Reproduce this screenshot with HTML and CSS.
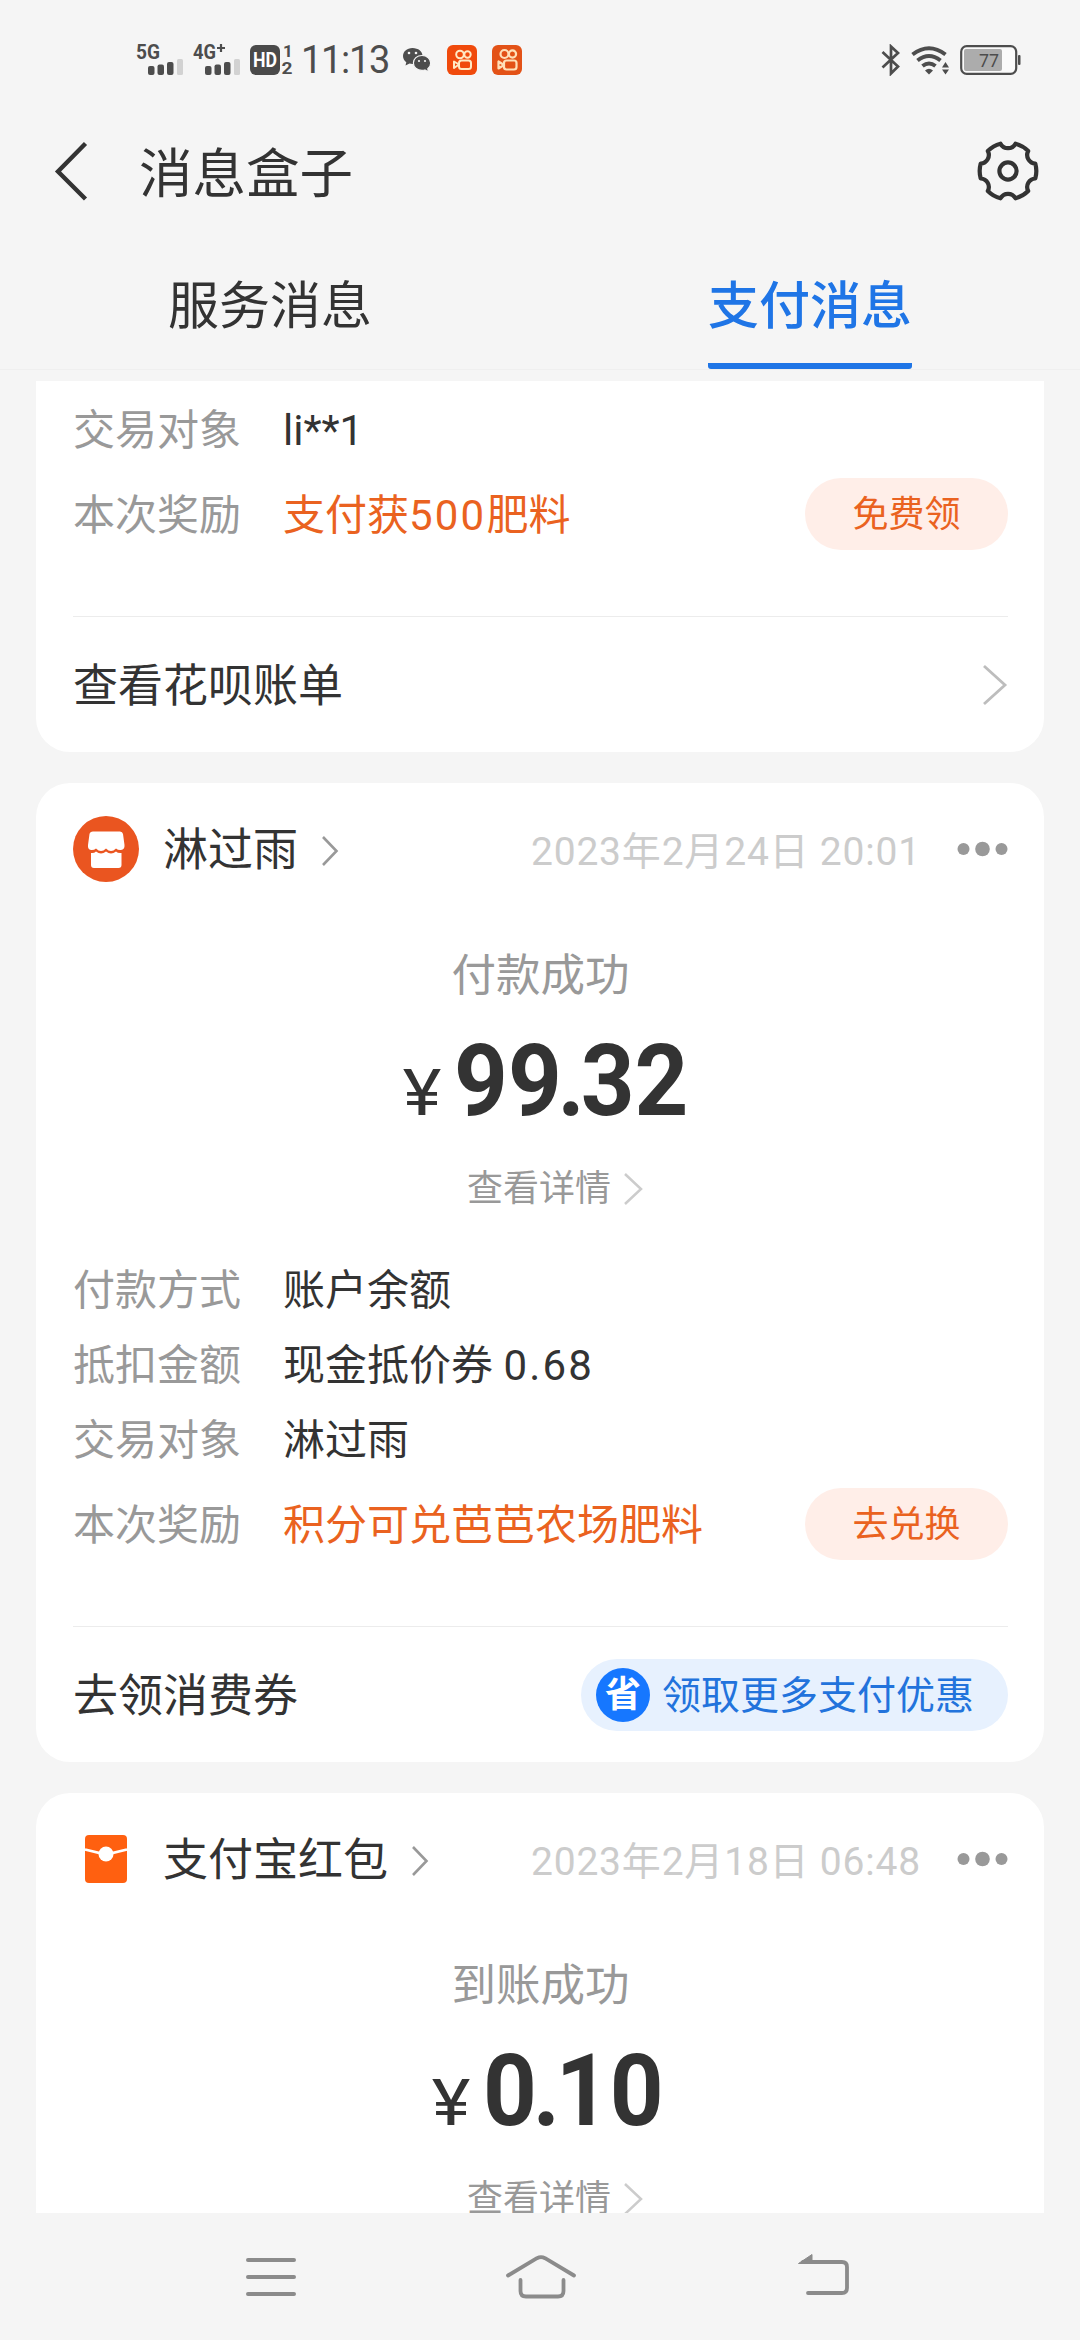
FILE: index.html
```html
<!DOCTYPE html>
<html lang="zh-CN">
<head>
<meta charset="utf-8">
<title>消息盒子</title>
<link rel="stylesheet" href="styles.css">
</head>
<body>
<div class="screen">
  <header class="top">
    <div class="status">
      <div class="status-left">
        <svg class="sig" width="48" height="50" viewBox="0 -8 48 50"><text x="0" y="15.500" class="net" textLength="24" lengthAdjust="spacingAndGlyphs">5G</text><g fill="#4d4d4d"><rect x="12" y="23" width="6.5" height="9" rx="2"/><rect x="21.500" y="21.500" width="6.5" height="10.500" rx="2"/><rect x="31" y="19" width="6.500" height="13" rx="2"/></g><rect x="41" y="16" width="6" height="16" rx="1.500" fill="#d2d2d2"/></svg>
        <svg class="sig sig-2" width="48" height="50" viewBox="0 -8 48 50"><text x="0" y="15.500" class="net" textLength="23" lengthAdjust="spacingAndGlyphs">4G</text><path d="M28 1v8M24 5h8" stroke="#4d4d4d" stroke-width="2.200"/><g fill="#4d4d4d"><rect x="12" y="23" width="6.500" height="9" rx="2"/><rect x="21.500" y="21.500" width="6.500" height="10.500" rx="2"/><rect x="31" y="19" width="6.500" height="13" rx="2"/></g><rect x="41" y="16" width="6" height="16" rx="1.500" fill="#d2d2d2"/></svg>
        <svg class="hd" width="44" height="48" viewBox="0 -8 44 48"><rect x="0" y="1" width="30" height="30" rx="6" fill="#4a4a4a"/><text x="3" y="23" class="hd-text" textLength="24" lengthAdjust="spacingAndGlyphs">HD</text><text x="33" y="13" class="sim">1</text><text x="31.500" y="30" class="sim" textLength="11" lengthAdjust="spacingAndGlyphs">2</text></svg>
        <span class="clock">11:13</span>
        <svg class="wechat" width="30" height="26" viewBox="0 0 30 26"><path d="M10.500 1C4.700 1 1 4.700 1 9c0 2.600 1.300 4.700 3.300 6.200L3.500 18.500l4-2c1 .3 2 .4 3 .4 5.800 0 10-3.700 10-8S16.300 1 10.500 1z" fill="#4d4d4d"/><path d="M20 8.500c-5 0-8.600 3.300-8.600 7.500s3.600 7.400 8.600 7.400c1 0 2-.1 2.900-.4l3.600 2-.7-3.200c1.800-1.400 2.900-3.400 2.900-5.800 0-4.200-3.700-7.500-8.700-7.500z" fill="#4d4d4d" stroke="#f5f5f5" stroke-width="1.200"/><g fill="#f5f5f5"><circle cx="7" cy="6" r="1.300"/><circle cx="14" cy="6" r="1.300"/><circle cx="17" cy="14" r="1.100"/><circle cx="23" cy="14" r="1.100"/></g></svg>
        <svg class="ks" width="30" height="30" viewBox="0 0 30 30"><rect width="30" height="30" rx="6" fill="#f04a0c"/><g fill="none" stroke="#ffe9c4" stroke-width="2"><circle cx="13" cy="9.500" r="3.800"/><circle cx="20.500" cy="9.500" r="3.200"/><rect x="12" y="15.500" width="12" height="8.500" rx="2.500"/><path d="M12 19.500 7 16.500v6.500z" stroke-linejoin="round"/></g></svg>
        <svg class="ks ks-2" width="30" height="30" viewBox="0 0 30 30"><rect width="30" height="30" rx="6" fill="#e35217"/><g fill="none" stroke="#ffe0b8" stroke-width="2.200"><circle cx="12.500" cy="9" r="4"/><circle cx="20.500" cy="9" r="3.600"/><rect x="12" y="15.500" width="12.500" height="9" rx="2.500"/><path d="M12 20 6.500 16.500v7z" stroke-linejoin="round"/></g></svg>
      </div>
      <div class="status-right">
        <svg width="20" height="32" viewBox="0 0 20 32"><path d="M1.500 8 17 22.500 10 29.500V2.500L17 9 1.500 23.500" fill="none" stroke="#4d4d4d" stroke-width="2.700"/></svg>
        <svg class="wifi" width="40" height="30" viewBox="0 0 40 30"><g fill="none" stroke="#4d4d4d" stroke-width="4"><path d="M1.500 9.500Q18 -3 34.500 9.500"/><path d="M6.500 15.500Q18 6.500 29.500 15.500"/><path d="M11.500 21Q18 16 24.500 21"/></g><path d="M14 25.500Q18 22 22 25.500L18 29.500z" fill="#4d4d4d"/><path d="M31 22.500h7L34.500 17zM31 24.500h7L34.500 29.500z" fill="#4d4d4d"/></svg>
        <svg class="battery" width="62" height="32" viewBox="0 0 62 32"><rect x="1.200" y="2.200" width="55" height="27.600" rx="5.500" fill="#fafafa" stroke="#4d4d4d" stroke-width="2.200"/><rect x="4" y="5" width="38" height="22" rx="2" fill="#acacac"/><rect x="58" y="11" width="2.500" height="10" rx="1" fill="#4d4d4d"/><text x="19" y="22.500" class="bat" textLength="20" lengthAdjust="spacingAndGlyphs">77</text></svg>
      </div>
    </div>
    <div class="titlebar">
      <svg class="back" width="36" height="60" viewBox="0 0 36 60"><path d="M31.500 2.500 4 30.500 31.500 58" fill="none" stroke="#333" stroke-width="4.400"/></svg>
      <h1 class="title">消息盒子</h1>
      <svg class="gear" width="62" height="62" viewBox="-31 -31 62 62"><g fill="none" stroke="#333" stroke-width="4.200"><path stroke-linejoin="round" d="M27.300 -7.500A28 28 0 0 1 27.300 7.500A8.500 8.500 0 0 0 20.200 20A28 28 0 0 1 7.500 27.300A8.500 8.500 0 0 0 -7.500 27.300A28 28 0 0 1 -20.200 20A8.500 8.500 0 0 0 -27.300 7.500A28 28 0 0 1 -27.300 -7.500A8.500 8.500 0 0 0 -20.200 -20A28 28 0 0 1 -7.500 -27.300A8.500 8.500 0 0 0 7.500 -27.300A28 28 0 0 1 20.200 -20A8.500 8.500 0 0 0 27.300 -7.500z"/><circle r="8.600"/></g></svg>
    </div>
    <nav class="tabs">
      <div class="tab"><span class="tab-label">服务消息</span></div>
      <div class="tab"><span class="tab-label tab-active">支付消息</span></div>
    </nav>
  </header>

  <main class="list">
    <section class="card card-first">
      <div class="row"><span class="label">交易对象</span><span class="value">li**1</span></div>
      <div class="row row-reward"><span class="label">本次奖励</span><span class="value value-hot">支付获<span class="num">500</span>肥料</span><span class="pill">免费领</span></div>
      <div class="foot"><span class="foot-text">查看花呗账单</span><svg width="27" height="44" viewBox="0 0 27 44"><path d="M3 3 24 22 3 41" fill="none" stroke="#bdbdbd" stroke-width="2.800"/></svg></div>
    </section>

    <section class="card">
      <div class="head">
        <svg class="avatar" width="66" height="66" viewBox="0 0 66 66"><circle cx="33" cy="33" r="33" fill="#ea5520"/><path d="M20 15.500h27q2.500 0 3 2.500l1.500 11q.4 4.500-3.500 5-3 .3-5-1.500-2.500 2.500-5 2.500T33 32.500q-2.500 2.500-5 2.500t-5-2.500q-2 1.800-5 1.500-3.500-.5-3-5l1.500-11q.5-2.500 3.500-2.500z" fill="#fff"/><path d="M18 37q3 .5 5-1.500 2.500 2 5 2t5-2q2.500 2 5 2t5-2q2 2 5.500 1.500V49q0 3-3 3H21q-3 0-3-3z" fill="#fff"/></svg>
        <span class="name">淋过雨</span>
        <svg class="head-arrow" width="18" height="34" viewBox="0 0 18 34"><path d="M2 3 15.500 17 2 31" fill="none" stroke="#999" stroke-width="2.600"/></svg>
        <span class="date">2023年2月24日 20:01</span>
        <svg class="dots" width="51" height="16" viewBox="0 0 51 16"><g fill="#999"><circle cx="6.500" cy="8" r="6"/><circle cx="25.500" cy="8" r="7.300"/><circle cx="44.500" cy="8" r="6"/></g></svg>
      </div>
      <div class="state">付款成功</div>
      <div class="amount"><span class="yen">¥</span><span class="sum">99<span class="dot">.</span>32</span></div>
      <div class="detail"><span>查看详情</span><svg width="20" height="34" viewBox="0 0 20 34"><path d="M2 2 18 17 2 32" fill="none" stroke="#ccc" stroke-width="2.500"/></svg></div>
      <div class="rows">
        <div class="row"><span class="label">付款方式</span><span class="value">账户余额</span></div>
        <div class="row"><span class="label">抵扣金额</span><span class="value">现金抵价券 <span class="num">0.68</span></span></div>
        <div class="row"><span class="label">交易对象</span><span class="value">淋过雨</span></div>
        <div class="row row-reward"><span class="label">本次奖励</span><span class="value value-hot">积分可兑芭芭农场肥料</span><span class="pill">去兑换</span></div>
      </div>
      <div class="foot"><span class="foot-text">去领消费券</span><span class="promo"><span class="promo-icon">省</span><span class="promo-text">领取更多支付优惠</span></span></div>
    </section>

    <section class="card card-last">
      <div class="head">
        <svg class="avatar" width="66" height="66" viewBox="0 0 66 66"><rect x="12" y="9" width="42" height="48" rx="4" fill="#ff6010"/><path d="M12 23.500 33 28.500 54 23.500" fill="none" stroke="#fff" stroke-width="2.800"/><circle cx="33" cy="28" r="7.500" fill="#fff"/></svg>
        <span class="name">支付宝红包</span>
        <svg class="head-arrow" width="18" height="34" viewBox="0 0 18 34"><path d="M2 3 15.500 17 2 31" fill="none" stroke="#999" stroke-width="2.600"/></svg>
        <span class="date">2023年2月18日 06:48</span>
        <svg class="dots" width="51" height="16" viewBox="0 0 51 16"><g fill="#999"><circle cx="6.500" cy="8" r="6"/><circle cx="25.500" cy="8" r="7.300"/><circle cx="44.500" cy="8" r="6"/></g></svg>
      </div>
      <div class="state">到账成功</div>
      <div class="amount"><span class="yen">¥</span><span class="sum">0<span class="dot">.</span>10</span></div>
      <div class="detail"><span>查看详情</span><svg width="20" height="34" viewBox="0 0 20 34"><path d="M2 2 18 17 2 32" fill="none" stroke="#ccc" stroke-width="2.500"/></svg></div>
    </section>
  </main>

  <footer class="navbar">
    <svg width="50" height="40" viewBox="0 0 50 40"><path d="M2 3h46M2 20h46M2 37h46" stroke="#8b8b8b" stroke-width="4" stroke-linecap="round"/></svg>
    <svg class="nav-home" width="72" height="44" viewBox="0 0 72 44"><g fill="none" stroke="#8b8b8b" stroke-width="3.800" stroke-linecap="round" stroke-linejoin="round"><path d="M3 20.500 32 3.200Q36 1.200 40 3.200L69 20.500"/><path d="M15.500 25v11q0 5.500 5.500 5.500h32q5.500 0 5.500-5.500V25"/></g></svg>
    <svg class="nav-back" width="54" height="44" viewBox="0 0 54 44"><path d="M6 9h39q5 0 5 5v21q0 5-5 5H11" fill="none" stroke="#8b8b8b" stroke-width="3.800" stroke-linecap="round"/><path d="M1.500 10.500 15 1.500V10.500z" fill="#8b8b8b" stroke="#8b8b8b" stroke-linejoin="round"/></svg>
  </footer>
</div>
</body>
</html>
```
FILE: styles.css
```css
* { box-sizing: border-box; }
body {
  margin: 0;
  background: #f5f5f5;
  color: #333;
  font-family: Roboto, "Noto Sans CJK SC", sans-serif;
}
svg { display: block; flex: none; }
.screen {
  width: 1080px;
  height: 2340px;
  display: flex;
  flex-direction: column;
  overflow: hidden;
}

/* header */
.top { height: 381px; flex: none; }
.status {
  height: 120px;
  padding: 0 58px 0 136px;
  display: flex;
  justify-content: space-between;
  align-items: center;
}
.status-left, .status-right { display: flex; align-items: center; }
.net { font: 700 21px Roboto, sans-serif; fill: #4d4d4d; }
.sig-2 { margin-left: 9px; }
.hd { margin-left: 9px; }
.hd-text { font: 700 20px Roboto, sans-serif; fill: #fff; }
.sim { font: 700 17px Roboto, sans-serif; fill: #4d4d4d; }
.clock {
  width: 90px;
  margin-left: 7px;
  font-size: 38px;
  line-height: 48px;
  letter-spacing: -1.300px;
  color: #4d4d4d;
  white-space: nowrap;
}
.wechat { margin-left: 11px; }
.ks { margin-left: 15px; }
.wifi { margin-left: 10px; }
.battery { margin-left: 9px; }
.bat { font: 400 18px Roboto, sans-serif; fill: #4d4d4d; }

.titlebar {
  height: 102px;
  padding: 0 41px 0 54px;
  display: flex;
  align-items: center;
}
.title {
  flex: 1;
  margin: 0 0 0 49px;
  font-size: 53.500px;
  line-height: 70px;
  font-weight: 400;
  padding-top: 7px;
}
.tabs {
  height: 148px;
  border-bottom: 1px solid #efefef;
  display: flex;
}
.tab { flex: 1; display: flex; justify-content: center; }
.tab-label {
  height: 147px;
  font-size: 51px;
  line-height: 170px;
}
.tab-active {
  color: #1f75e6;
  font-weight: 500;
  border-radius: 3px;
  background: linear-gradient(#1f75e6, #1f75e6) 0 100% / 100% 6px no-repeat;
}

/* message list */
.list {
  height: 1832px;
  flex: none;
  padding: 0 36px;
  overflow: hidden;
  display: flex;
  flex-direction: column;
  gap: 31px;
}
.card {
  flex: none;
  background: #fff;
  border-radius: 34px;
  padding: 33px 36px 0 37px;
}
.card-first { border-radius: 0 0 34px 34px; padding-top: 12px; }
.card-last { padding-bottom: 60px; }
.head { height: 66px; display: flex; align-items: center; }
.name { margin-left: 24px; padding-top: 3px; font-size: 45px; line-height: 60px; }
.head-arrow { margin: 4px 0 0 23px; }
.date {
  margin-left: auto;
  font-size: 39px;
  line-height: 60px;
  padding-top: 5px;
  letter-spacing: .8px;
  color: #ccc;
}
.dots { margin-left: 36px; }
.state {
  margin-top: 64px;
  text-align: center;
  font-size: 44.500px;
  line-height: 60px;
  color: #999;
}
.amount {
  height: 100px;
  margin-top: 25px;
  padding-left: 15px;
  display: flex;
  justify-content: center;
  align-items: baseline;
}
.yen {
  font-size: 65px;
  line-height: 100px;
  transform: scaleX(1.13);
}
.sum {
  margin: 0 -15px 0 15px;
  font-size: 101px;
  line-height: 100px;
  font-weight: 700;
  transform: scaleX(.93);
  transform-origin: 0 50%;
}
.dot { margin: 0 -4.500px; }
.detail {
  margin-top: 33px;
  height: 50px;
  padding-left: 29px;
  display: flex;
  justify-content: center;
  align-items: center;
  gap: 12px;
  font-size: 36px;
  line-height: 50px;
  color: #999;
}
.rows { margin-top: 39px; }
.row {
  height: 75px;
  display: flex;
  align-items: center;
  font-size: 42px;
  line-height: 60px;
}
.row-reward { height: 95px; }
.label { width: 210px; color: #999; }
.value { flex: 1; }
.value-hot { color: #ea6220; }
.num { letter-spacing: 2.200px; }
.pill {
  width: 203px;
  height: 72px;
  margin-top: -3px;
  border-radius: 36px;
  background: #ffeee8;
  color: #ea6220;
  font-size: 36px;
  line-height: 75px;
  text-align: center;
}
.foot {
  margin-top: 53px;
  height: 136px;
  border-top: 1px solid #ececec;
  display: flex;
  align-items: center;
  justify-content: space-between;
  font-size: 45px;
  line-height: 60px;
}
.foot-text { padding-top: 5px; }
.promo {
  width: 427px;
  height: 72px;
  border-radius: 36px;
  padding-left: 15px;
  display: flex;
  align-items: center;
  background: #e7f1fe;
  color: #2273dc;
  font-size: 39px;
}
.promo-icon {
  width: 54px;
  height: 54px;
  margin-right: 12px;
  border-radius: 50%;
  background: #1677ff;
  color: #fff;
  font-size: 36px;
  font-weight: 700;
  line-height: 54px;
  text-align: center;
}
.promo-text { padding-top: 2px; }

/* system navigation */
.navbar {
  flex: 1;
  padding: 0 0 0 246px;
  display: flex;
  align-items: center;
}
.nav-home { margin-left: 209px; }
.nav-back { margin-left: 220px; margin-top: -4px; }
```
